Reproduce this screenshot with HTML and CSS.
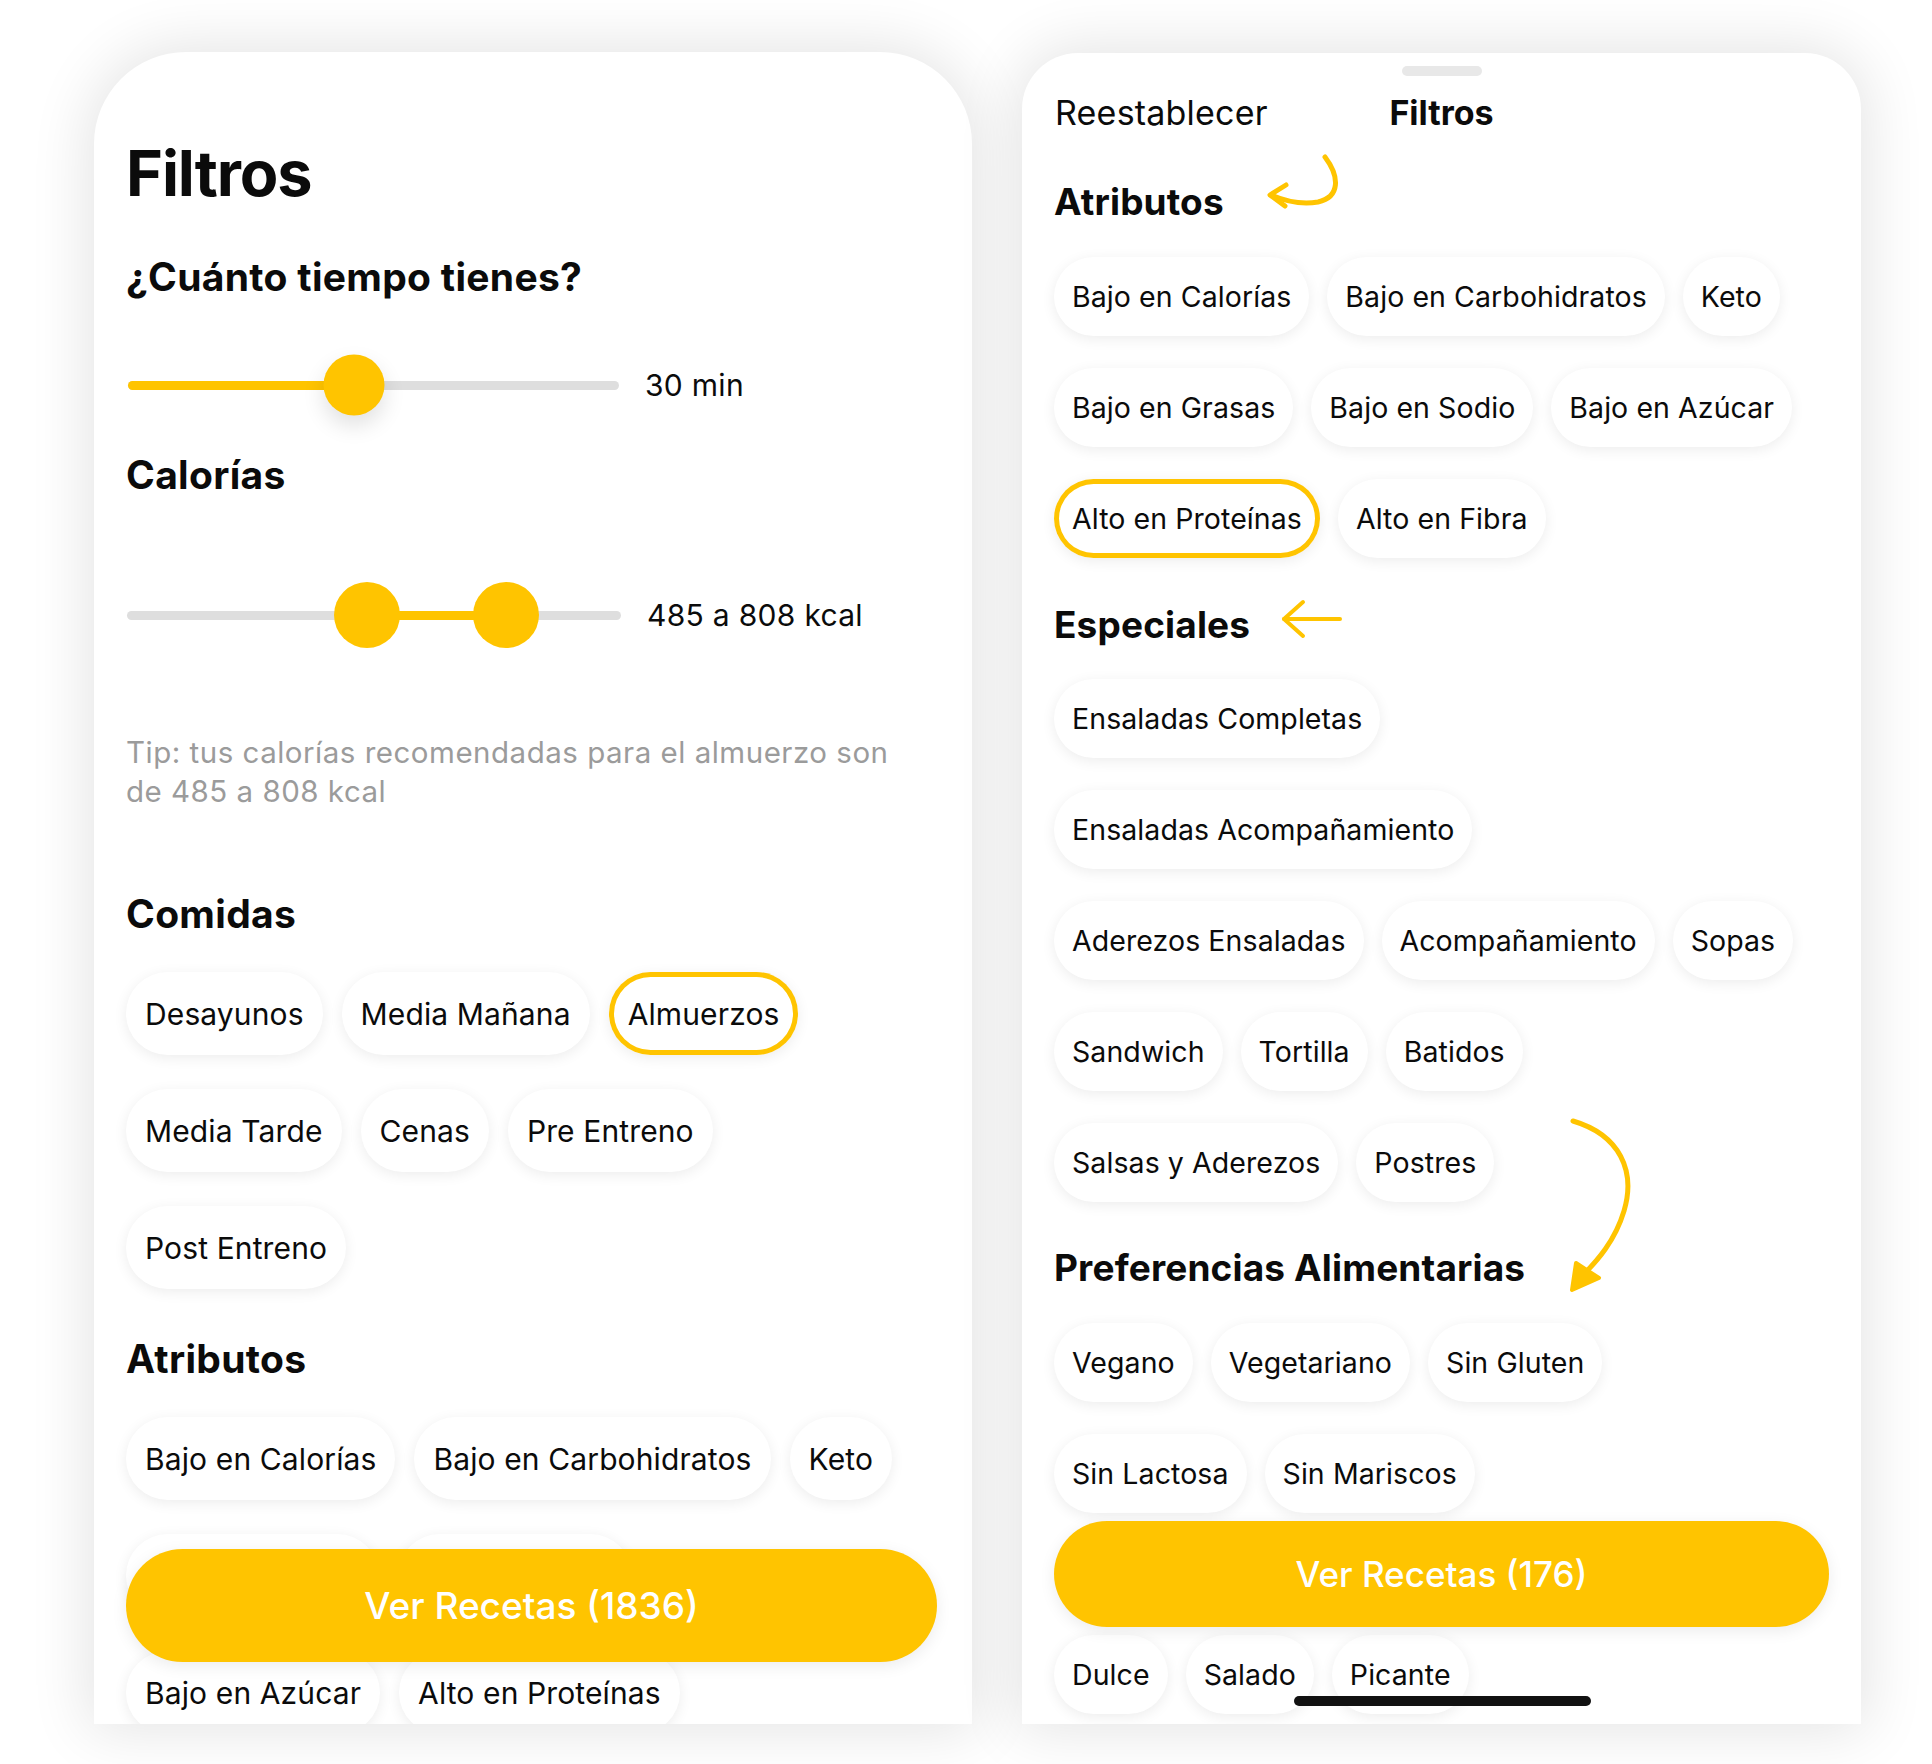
FILE: index.html
```html
<!DOCTYPE html>
<html lang="es">
<head>
<meta charset="utf-8">
<title>Filtros</title>
<link rel="stylesheet" href="styles.css">
</head>
<body>
<div class="stage">
  <section class="card card-left">
    <h1 class="title">Filtros</h1>
    <h2 class="sec sec-time">¿Cuánto tiempo tienes?</h2>
    <div class="slider-row sr-1">
      <div class="track" style="width:491px">
        <div class="fill" style="left:0;width:226px"></div>
        <div class="thumb thumb-shadow" style="left:226px;width:61px;height:61px"></div>
      </div>
      <span class="value">30 min</span>
    </div>
    <h2 class="sec sec-cal">Calorías</h2>
    <div class="slider-row sr-2">
      <div class="track track-2" style="width:494px">
        <div class="fill" style="left:240px;width:139px"></div>
        <div class="thumb" style="left:240px;width:66px;height:66px"></div>
        <div class="thumb" style="left:379px;width:66px;height:66px"></div>
      </div>
      <span class="value">485 a 808 kcal</span>
    </div>
    <p class="tip">Tip: tus calorías recomendadas para el almuerzo son<br>de 485 a 808 kcal</p>
    <h2 class="sec sec-comidas">Comidas</h2>
    <div class="chips chips-l chips-comidas">
      <div class="row"><span class="chip">Desayunos</span><span class="chip">Media Mañana</span><span class="chip selected">Almuerzos</span></div>
      <div class="row"><span class="chip">Media Tarde</span><span class="chip">Cenas</span><span class="chip">Pre Entreno</span></div>
      <div class="row"><span class="chip">Post Entreno</span></div>
    </div>
    <h2 class="sec sec-attr">Atributos</h2>
    <div class="chips chips-l chips-attr">
      <div class="row"><span class="chip">Bajo en Calorías</span><span class="chip">Bajo en Carbohidratos</span><span class="chip">Keto</span></div>
      <div class="row row-hidden"><span class="chip">Bajo en Grasas</span><span class="chip">Bajo en Sodio</span></div>
      <div class="row"><span class="chip">Bajo en Azúcar</span><span class="chip">Alto en Proteínas</span></div>
    </div>
    <button class="cta cta-left">Ver Recetas (1836)</button>
  </section>

  <section class="card card-right">
    <div class="grabber"></div>
    <header class="sheet-head">
      <span class="reset">Reestablecer</span>
      <span class="sheet-title">Filtros</span>
      <span></span>
    </header>
    <h2 class="rsec rs-attr">Atributos</h2>
    <div class="chips chips-r chips-r-attr">
      <div class="row"><span class="chip">Bajo en Calorías</span><span class="chip">Bajo en Carbohidratos</span><span class="chip">Keto</span></div>
      <div class="row"><span class="chip">Bajo en Grasas</span><span class="chip">Bajo en Sodio</span><span class="chip">Bajo en Azúcar</span></div>
      <div class="row"><span class="chip selected">Alto en Proteínas</span><span class="chip">Alto en Fibra</span></div>
    </div>
    <h2 class="rsec rs-esp">Especiales</h2>
    <div class="chips chips-r chips-r-esp">
      <div class="row"><span class="chip">Ensaladas Completas</span></div>
      <div class="row"><span class="chip">Ensaladas Acompañamiento</span></div>
      <div class="row"><span class="chip">Aderezos Ensaladas</span><span class="chip">Acompañamiento</span><span class="chip">Sopas</span></div>
      <div class="row"><span class="chip">Sandwich</span><span class="chip">Tortilla</span><span class="chip">Batidos</span></div>
      <div class="row"><span class="chip">Salsas y Aderezos</span><span class="chip">Postres</span></div>
    </div>
    <h2 class="rsec rs-pref">Preferencias Alimentarias</h2>
    <div class="chips chips-r chips-r-pref">
      <div class="row"><span class="chip">Vegano</span><span class="chip">Vegetariano</span><span class="chip">Sin Gluten</span></div>
      <div class="row"><span class="chip">Sin Lactosa</span><span class="chip">Sin Mariscos</span></div>
    </div>
    <div class="chips chips-r chips-r-sabor">
      <div class="row"><span class="chip">Dulce</span><span class="chip">Salado</span><span class="chip">Picante</span></div>
    </div>

    <svg class="arrows" width="839" height="1671" viewBox="0 0 839 1671" fill="none" stroke="#FFC400" stroke-linecap="round" stroke-linejoin="round">
      <path d="M303 104 C318 124 318 144 296 149 C280 152 263 148 249 142" stroke-width="5"/>
      <path d="M264 132 L248 142 L263 153" stroke-width="5"/>
      <path d="M318 566 L262 566" stroke-width="4"/>
      <path d="M281 549 L262 566 L281 583" stroke-width="4"/>
      <path d="M551 1068 C598 1082 614 1118 602 1158 C593 1188 575 1208 561 1222" stroke-width="5"/>
      <path d="M550 1237 L554 1210 L577 1225 Z" fill="#FFC400" stroke-width="4"/>
    </svg>

    <button class="cta cta-right">Ver Recetas (176)</button>
    <div class="home-bar"></div>
  </section>
</div>
</body>
</html>
```

FILE: styles.css
```css
html, body {
  margin: 0;
  padding: 0;
}
body {
  width: 1932px;
  height: 1764px;
  overflow: hidden;
  background: #ffffff;
  font-family: Inter, "Noto Sans", "Liberation Sans", sans-serif;
  color: #0b0b0b;
}
.stage {
  display: flex;
  align-items: flex-start;
  gap: 50px;
  padding: 52px 0 0 94px;
}
.card {
  position: relative;
  background: #ffffff;
  box-sizing: border-box;
  overflow: hidden;
  box-shadow: 0 0 60px 6px rgba(0, 0, 0, 0.11);
}
.card-left {
  width: 878px;
  height: 1672px;
  border-radius: 92px 92px 0 0;
  padding: 90px 35px 0 32px;
}
.card-right {
  width: 839px;
  height: 1671px;
  margin-top: 1px;
  border-radius: 56px 56px 0 0;
  padding: 13px 32px 0 32px;
}

/* Left card texts */
.title {
  margin: 0;
  font-size: 63px;
  line-height: 1;
  font-weight: 700;
  letter-spacing: -1.1px;
}
.sec {
  margin: 0;
  font-size: 39px;
  line-height: 1;
  font-weight: 700;
  letter-spacing: 0.3px;
}
.sec-time { margin-top: 52px; }
.sec-cal { margin-top: 37px; }
.sec-comidas { margin-top: 83px; }
.sec-attr { margin-top: 50px; }

.slider-row {
  display: flex;
  align-items: center;
  height: 66px;
}
.sr-1 { margin-top: 56px; }
.sr-2 { margin-top: 88px; }
.track {
  position: relative;
  height: 9px;
  margin-left: 2px;
  border-radius: 5px;
  background: #dedede;
}
.track-2 { margin-left: 1px; }
.fill {
  position: absolute;
  top: 0;
  height: 9px;
  border-radius: 5px;
  background: #FFC400;
}
.thumb {
  position: absolute;
  top: 50%;
  border-radius: 50%;
  background: #FFC400;
  transform: translate(-50%, -50%);
}
.thumb-shadow {
  box-shadow: 0 10px 22px rgba(0, 0, 0, 0.12);
}
.value {
  margin-left: 26px;
  font-size: 30px;
  line-height: 1;
  font-weight: 400;
  letter-spacing: 0.3px;
}
.tip {
  margin: 85px 0 0 0;
  font-size: 29.5px;
  line-height: 39px;
  letter-spacing: 0.5px;
  color: #9b9b9b;
}

/* Chips */
.chips {
  display: flex;
  flex-direction: column;
}
.row {
  display: flex;
}
.chip {
  display: inline-flex;
  align-items: center;
  box-sizing: border-box;
  background: #ffffff;
  border-radius: 999px;
  white-space: nowrap;
  color: #0b0b0b;
  box-shadow: 0 3px 14px rgba(0, 0, 0, 0.075);
}
.chip.selected {
  box-shadow: inset 0 0 0 5px #FFC400, 0 3px 14px rgba(0, 0, 0, 0.075);
}
.chips-l { gap: 34px; margin-top: 39px; }
.chips-l .row { gap: 19px; }
.chips-l .chip {
  height: 83px;
  padding: 0 19px;
  font-size: 30px;
  letter-spacing: 0.12px;
}
.chips-r { gap: 32px; }
.chips-r .row { gap: 18px; }
.chips-r .chip {
  height: 79px;
  padding: 0 18px;
  font-size: 28.5px;
  letter-spacing: 0.08px;
}
.chips-r-attr { margin-top: 37px; }
.chips-r-esp { margin-top: 36px; }
.chips-r-pref { margin-top: 37px; }
.chips-r-sabor { margin-top: 122px; }

/* Right card */
.grabber {
  width: 80px;
  height: 10px;
  margin: 0 auto;
  border-radius: 5px;
  background: #e8e8e8;
}
.sheet-head {
  display: grid;
  grid-template-columns: 1fr auto 1fr;
  align-items: baseline;
  margin-top: 20px;
  font-size: 34px;
  line-height: 1;
}
.reset {
  font-weight: 400;
  padding-left: 1px;
  letter-spacing: 0.2px;
}
.sheet-title {
  font-weight: 700;
}
.rsec {
  margin: 0;
  font-size: 37px;
  line-height: 1;
  font-weight: 700;
  letter-spacing: 0.15px;
}
.rs-attr { margin-top: 53px; }
.rs-esp { margin-top: 48px; }
.rs-pref { margin-top: 47px; }

.arrows {
  position: absolute;
  left: 0;
  top: 0;
  pointer-events: none;
}

/* CTA buttons */
.cta {
  position: absolute;
  left: 32px;
  border: 0;
  border-radius: 999px;
  background: #FFC400;
  color: #ffffff;
  font-family: Inter, "Noto Sans", "Liberation Sans", sans-serif;
  font-weight: 500;
  box-shadow: 0 4px 16px rgba(0, 0, 0, 0.08);
}
.cta-left {
  top: 1497px;
  width: 811px;
  height: 113px;
  font-size: 37px;
}
.cta-right {
  top: 1468px;
  width: 775px;
  height: 106px;
  font-size: 35px;
}
.home-bar {
  position: absolute;
  left: 50%;
  top: 1643px;
  width: 297px;
  height: 10px;
  margin-left: -148px;
  border-radius: 5px;
  background: #111111;
}
```
